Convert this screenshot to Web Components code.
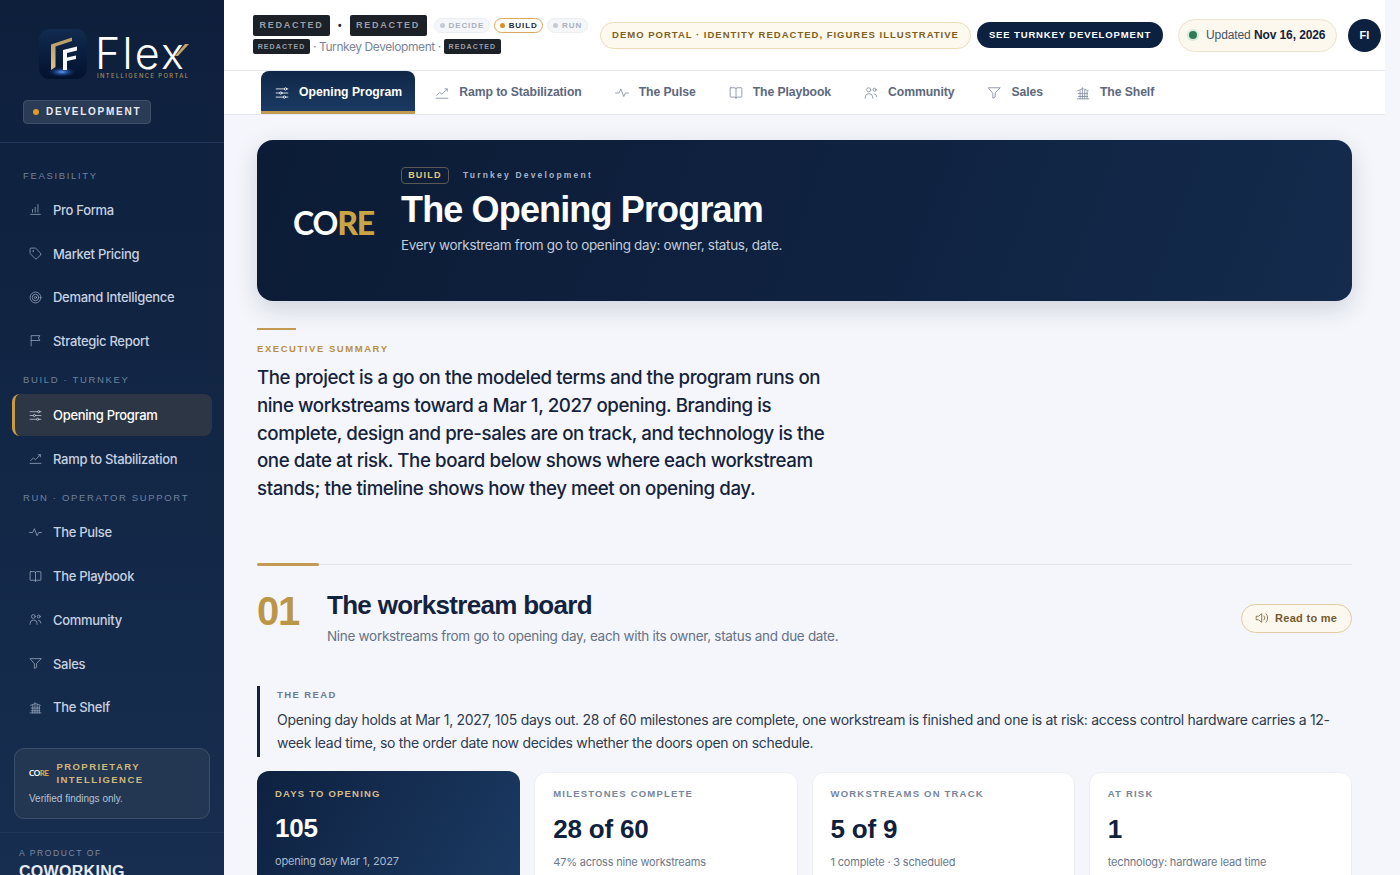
<!doctype html>
<html lang="en"><head><meta charset="utf-8"><title>Flex Intelligence Portal</title>
<style>
html,body{margin:0;height:875px;overflow:hidden;background:#f4f6fb;font-family:"Liberation Sans",sans-serif}
</style></head><body>
<app-shell>
  <side-bar slot="side"></side-bar>
  <top-bar></top-bar>
  <tab-bar></tab-bar>
  <page-body>
    <hero-band></hero-band>
    <exec-summary></exec-summary>
    <section-head num="01" title="The workstream board" sub="Nine workstreams from go to opening day, each with its owner, status and due date."></section-head>
    <read-note>Opening day holds at Mar 1, 2027, 105 days out. 28 of 60 milestones are complete, one workstream is finished and one is at risk: access control hardware carries a 12-week lead time, so the order date now decides whether the doors open on schedule.</read-note>
    <stat-row>
      <stat-card dark label="DAYS TO OPENING" value="105" sub="opening day Mar 1, 2027"></stat-card>
      <stat-card label="MILESTONES COMPLETE" value="28 of 60" sub="47% across nine workstreams"></stat-card>
      <stat-card label="WORKSTREAMS ON TRACK" value="5 of 9" sub="1 complete · 3 scheduled"></stat-card>
      <stat-card label="AT RISK" value="1" sub="technology: hardware lead time"></stat-card>
    </stat-row>
  </page-body>
</app-shell>
<script>
const ICONS={
 bars:'<path d="M3 21h18M6.5 17v-5M11.5 17V8M16.5 17V3"/>',
 tag:'<path d="M12.6 2.6A2 2 0 0 0 11.2 2H4a2 2 0 0 0-2 2v7.2a2 2 0 0 0 .6 1.4l8.7 8.7a2.4 2.4 0 0 0 3.4 0l6.6-6.6a2.4 2.4 0 0 0 0-3.4z"/><circle cx="7.5" cy="7.5" r=".6"/>',
 target:'<circle cx="12" cy="12" r="10"/><circle cx="12" cy="12" r="6"/><circle cx="12" cy="12" r="2"/>',
 flag:'<path d="M4 22V3h16l-2.5 4.5L20 12H4"/>',
 sliders:'<path d="M2 5h14M20 5h2M2 12h6M12 12h10M2 19h12M18 19h4"/><circle cx="18" cy="5" r="2"/><circle cx="10" cy="12" r="2"/><circle cx="16" cy="19" r="2"/>',
 trend:'<path d="M2 21h20M3 16l5-5 4 3 9-9"/><path d="M17 5h4v4"/>',
 pulse:'<path d="M23 12h-5l-3 6-5-13-3 7H1"/>',
 book:'<path d="M12 5v16M3 3h7a2 2 0 0 1 2 2 2 2 0 0 1 2-2h7a1 1 0 0 1 1 1v14a1 1 0 0 1-1 1h-7a2 2 0 0 0-2 2 2 2 0 0 0-2-2H3a1 1 0 0 1-1-1V4a1 1 0 0 1 1-1z"/>',
 users:'<circle cx="8" cy="6.5" r="3.5"/><path d="M2 21v-1.5A6.5 6.5 0 0 1 8.5 13 6.5 6.5 0 0 1 15 19.5V21"/><circle cx="18" cy="6.5" r="2.7"/><path d="M17.5 13.5A5 5 0 0 1 22 18.5"/>',
 filter:'<path d="M22 3H2l8 9.5V21l4-2v-6.5z"/>',
 shelf:'<path d="M2 22h20M4 18h16M4 13h7M13 13h7M7 22V8M11 22V3M15 22V7M19 22V9M3 8l8-3M13 5l8 3"/>',
 vol:'<path d="M11 5 6 9H2v6h4l5 4z"/><path d="M15.5 8.5a5 5 0 0 1 0 7M19 5a10 10 0 0 1 0 14"/>'
};
const def=(n,render)=>customElements.define(n,class extends HTMLElement{
  connectedCallback(){ if(this.shadowRoot)return; const r=this.attachShadow({mode:'open'}); r.innerHTML=render(this); }
});
const a=(el,n)=>el.getAttribute(n)||'';
const LS='"Liberation Sans",sans-serif', IN='Inter,"Liberation Sans",sans-serif';
def('line-icon',el=>`<style>:host{display:inline-flex;width:var(--s,14px);height:var(--s,14px);flex:none}svg{width:100%;height:100%;fill:none;stroke:currentColor;stroke-width:var(--w,1.35);stroke-linecap:round;stroke-linejoin:round}</style><svg viewBox="0 0 24 24">${ICONS[a(el,'name')]}</svg>`);

def('app-shell',()=>`<style>:host{display:flex;height:875px;overflow:hidden}
main{width:1161px;flex:none;display:flex;flex-direction:column;min-height:0;overflow:hidden}</style>
<slot name="side"></slot><main><slot></slot></main>`);

def('flex-logo',()=>`<style>:host{display:flex;align-items:flex-start;gap:10px;position:relative}
.w{font:300 43px/38px ${IN};color:#fff;letter-spacing:2.2px;display:block;height:38px;margin:5px 0 0 -2px}
.t{font:500 5.8px/8px ${IN};color:#a68f5e;letter-spacing:1.42px;display:block;white-space:nowrap;margin:0}
.x{position:absolute;left:136px;top:14px}</style>
<svg width="48" height="50" viewBox="0 0 48 50"><defs><linearGradient id="g" x1="0" y1="0" x2="0" y2="1"><stop offset="0" stop-color="#112a4f"/><stop offset="1" stop-color="#03122d"/></linearGradient><linearGradient id="o" x1="0" y1="0" x2="0" y2="1"><stop offset="0" stop-color="#b59a62"/><stop offset="1" stop-color="#e0c186"/></linearGradient><radialGradient id="h" cx=".5" cy=".5" r=".5"><stop offset="0" stop-color="#5a9dff"/><stop offset="1" stop-color="#0a2f78" stop-opacity="0"/></radialGradient></defs>
<rect width="48" height="50" rx="10" fill="url(#g)"/><ellipse cx="23" cy="43" rx="14" ry="5" fill="url(#h)"/>
<path d="M12 41V15.5l21-7v3.500l-16.500 5.500V38z" fill="url(#o)"/><path d="M24 41V21l14-3.500v4l-10 2.500v4.500l9-2v3.500l-9 2V41z" fill="#f4f6fa"/></svg>
<div><span class="w">Flex</span><span class="t">INTELLIGENCE PORTAL</span></div>
<svg class="x" width="14" height="13" viewBox="0 0 14 13"><path d="M0 13 10 1h4L3 13z" fill="#c3a369"/></svg>`);

def('nav-label',()=>`<style>:host{display:block;font:400 9.5px/14px ${LS};letter-spacing:1.65px;color:#6f819d;padding:0 23px;white-space:nowrap;margin-bottom:var(--mb,6px)}</style><slot></slot>`);
def('nav-item',el=>`<style>:host{display:flex;align-items:center;gap:11px;height:41.7px;margin:0 12px 2px;padding-left:17px;box-sizing:border-box;border-radius:8px;font:500 13px/16px ${IN};letter-spacing:-.3px;color:#c7d1e0;--s:13px;--w:1.4;white-space:nowrap}
:host([active]){background:#2c3645;color:#fff;border-left:3px solid #c89a45;padding-left:14px}
line-icon{color:#9aa9bf}:host([active]) line-icon{color:#c8d1dd}</style><line-icon name="${a(el,'icon')}"></line-icon><slot></slot>`);

def('side-bar',()=>`<style>:host{display:flex;flex-direction:column;width:224px;flex:none;height:875px;box-sizing:border-box;background:linear-gradient(180deg,#0d1f3b 0%,#172e50 100%);overflow:hidden}
.top{height:143px;flex:none;box-sizing:border-box;border-bottom:1px solid #22375a;padding:29px 0 0 39px}
.pill{display:inline-flex;align-items:center;gap:7px;margin:20px 0 0 -16px;height:24px;width:128px;box-sizing:border-box;padding-left:9px;background:#2a3b56;border:1px solid #3f506b;border-radius:4px;font:700 10px/1 ${LS};letter-spacing:1.75px;color:#e6ebf3}
.pill i{width:6px;height:6px;border-radius:50%;background:#e09a2c}
nav{padding-top:26px;flex:none}nav .g{margin-top:11.5px;--mb:7px}nav .g2{margin-top:11px}
.card{margin:17.5px 14px 0;height:71px;flex:none;box-sizing:border-box;background:#233753;border:1px solid #3b4e6b;border-radius:10px;padding:11px 14px}
.r{display:flex;align-items:center;gap:8px}.c{font:700 8px/1 Lato,${LS};letter-spacing:-.5px;color:#fff;width:21px}.c b{color:#c9a64e}
.p{font:700 9.5px/13px ${LS};letter-spacing:1.45px;color:#d1b77b}
.v{font:400 10px/14px ${LS};color:#b7c2d2;margin-top:6px}
.f{margin-top:13px;border-top:1px solid #22375a;padding:14px 19px 0}
.a{font:400 8.5px/12px ${LS};letter-spacing:1.6px;color:#7c8aa2}.k{font:700 16px/18px ${LS};color:#e6eaf0;letter-spacing:.3px;margin-top:4px}</style>
<div class="top"><flex-logo></flex-logo><span class="pill"><i></i>DEVELOPMENT</span></div>
<nav><nav-label>FEASIBILITY</nav-label>
<nav-item icon="bars">Pro Forma</nav-item><nav-item icon="tag">Market Pricing</nav-item><nav-item icon="target">Demand Intelligence</nav-item><nav-item icon="flag">Strategic Report</nav-item>
<div class="g"><nav-label>BUILD · TURNKEY</nav-label></div>
<nav-item icon="sliders" active>Opening Program</nav-item><nav-item icon="trend">Ramp to Stabilization</nav-item>
<div class="g g2"><nav-label>RUN · OPERATOR SUPPORT</nav-label></div>
<nav-item icon="pulse">The Pulse</nav-item><nav-item icon="book">The Playbook</nav-item><nav-item icon="users">Community</nav-item><nav-item icon="filter">Sales</nav-item><nav-item icon="shelf">The Shelf</nav-item></nav>
<div class="card"><div class="r"><span class="c">CO<b>RE</b></span><span class="p">PROPRIETARY INTELLIGENCE</span></div><div class="v">Verified findings only.</div></div>
<div class="f"><div class="a">A PRODUCT OF</div><div class="k">COWORKING</div></div>`);

def('redact-tag',el=>`<style>:host{display:inline-flex;align-items:center;justify-content:center;background:#1c2027;color:#9a9ea6;border-radius:2px;font:700 ${el.hasAttribute('sm')?'7px':'9px'}/1 ${LS};letter-spacing:${el.hasAttribute('sm')?'1.1px':'1.75px'};height:${el.hasAttribute('sm')?'15px':'21px'};width:${el.hasAttribute('sm')?'57px':'77px'}}</style>REDACTED`);
def('phase-pill',el=>`<style>:host{display:inline-flex;align-items:center;gap:4px;height:15px;box-sizing:border-box;padding:0 4.5px 0 5px;border-radius:8px;border:1px solid #eceef3;background:#f5f6f9;color:#a9b0bd;font:700 8px/1 ${LS};letter-spacing:.9px}
:host([on]){background:#fffdf8;border-color:#d9a860;color:#1f2b40}i{width:5px;height:5px;border-radius:50%;background:#c5cad3}:host([on]) i{background:#d98e2b}</style><i></i><slot></slot>`);

def('top-bar',()=>`<style>:host{display:flex;align-items:center;flex:none;box-sizing:border-box;height:71px;background:#fff;border-bottom:1px solid #e5e8ef;padding:0 4px 0 29px}
.id{width:347px;flex:none}.l{display:flex;align-items:center}.l1 b{margin:0 8px;font:700 10px/1 ${LS};color:#1c2027}.l1 phase-pill{margin-right:4px}.l1 phase-pill:first-of-type{margin-left:7px}.l1{margin-top:-1px}
.l2{margin-top:3px;font:400 12px/15px ${IN};letter-spacing:-.42px;color:#7a8699;gap:3px}
.demo{display:flex;align-items:center;justify-content:center;width:371px;height:27px;box-sizing:border-box;flex:none;background:#fdf9ee;border:1px solid #ecdcb6;border-radius:14px;font:700 9.5px/1 ${LS};letter-spacing:1px;color:#7e6120;white-space:nowrap}
.cta{display:flex;align-items:center;justify-content:center;width:186px;height:26px;flex:none;margin-left:6px;background:#0c2140;color:#fff;border-radius:13px;font:700 9.5px/1 ${LS};letter-spacing:.86px;white-space:nowrap}
.up{display:flex;align-items:center;gap:9px;box-sizing:border-box;width:159px;height:33px;flex:none;margin-left:15px;padding-left:10px;background:#fcf8ee;border:1px solid #ece3cd;border-radius:17px;font:400 12px/1 ${LS};letter-spacing:-.1px;color:#465266;white-space:nowrap}
.up i{width:8px;height:8px;border-radius:50%;background:#2f7d57;box-shadow:0 0 0 2px #d8eadf}.up b{font-weight:700;color:#16233a}
.av{width:33px;height:33px;flex:none;margin-left:11px;border-radius:50%;background:#0c2140;color:#fff;display:flex;align-items:center;justify-content:center;font:700 11px/1 ${LS}}</style>
<div class="id"><div class="l l1"><redact-tag></redact-tag><b>•</b><redact-tag></redact-tag><phase-pill>DECIDE</phase-pill><phase-pill on>BUILD</phase-pill><phase-pill>RUN</phase-pill></div>
<div class="l l2"><redact-tag sm></redact-tag>· Turnkey Development ·<redact-tag sm></redact-tag></div></div>
<div class="demo">DEMO PORTAL · IDENTITY REDACTED, FIGURES ILLUSTRATIVE</div><div class="cta">SEE TURNKEY DEVELOPMENT</div>
<div class="up"><i></i><span>Updated <b>Nov 16, 2026</b></span></div><div class="av">FI</div>`);

def('tab-item',el=>`<style>:host{display:inline-flex;align-items:center;gap:10px;height:43px;box-sizing:border-box;padding:0 13px 0 20px;font:700 12.2px/1 ${LS};letter-spacing:-.07px;color:#5c687c;white-space:nowrap;--s:14px;--w:1.4}
:host([active]){background:linear-gradient(180deg,#0f2747,#1b3a63);color:#fff;border-radius:8px 8px 0 0;border-bottom:3px solid #c29a52;padding:3px 13px 0 14px;letter-spacing:.02px}line-icon{color:#7f8b9e}:host([active]) line-icon{color:#fff}</style><line-icon name="${a(el,'icon')}"></line-icon><slot></slot>`);
def('tab-bar',()=>`<style>:host{display:flex;flex:none;height:44px;box-sizing:border-box;background:#fff;border-bottom:1px solid #e5e8ef;padding-left:37px}</style>
<tab-item icon="sliders" active>Opening Program</tab-item><tab-item icon="trend">Ramp to Stabilization</tab-item><tab-item icon="pulse">The Pulse</tab-item><tab-item icon="book">The Playbook</tab-item><tab-item icon="users">Community</tab-item><tab-item icon="filter">Sales</tab-item><tab-item icon="shelf">The Shelf</tab-item>`);

def('page-body',()=>`<style>:host{display:block;padding:25px 33px 0;flex:1;min-height:0;box-sizing:border-box;overflow:hidden}</style><slot></slot>`);

def('hero-band',()=>`<style>:host{display:flex;align-items:center;height:161px;box-sizing:border-box;padding:0 36px 20px;border-radius:16px;background:linear-gradient(110deg,#0c1c36 0%,#0f2240 55%,#142b4d 100%);box-shadow:0 8px 24px rgba(16,32,64,.16);color:#fff}
.logo{font:700 32px/1 Lato,"Open Sans",sans-serif;letter-spacing:-1.2px;width:108px;flex:none;margin-top:24px}.logo b{color:#c9a545}
.m{display:flex;align-items:center;gap:14px}.tag{border:1px solid #5a5a52;border-radius:4px;height:17px;width:48px;box-sizing:border-box;display:flex;align-items:center;justify-content:center;font:700 9px/1 ${LS};letter-spacing:1.25px;color:#e2c77e}
.k{font:700 8.5px/1 ${LS};letter-spacing:2.2px;color:#a6b3c8}
h1{margin:6px 0;font:700 36px/40px ${LS};letter-spacing:-.85px}
p{margin:0;font:400 13.5px/18px ${IN};letter-spacing:-.32px;color:#c1ccdb}</style>
<div class="logo">CO<b>RE</b></div><div><div class="m"><span class="tag">BUILD</span><span class="k">Turnkey Development</span></div><h1>The Opening Program</h1><p>Every workstream from go to opening day: owner, status, date.</p></div>`);

def('exec-summary',()=>`<style>:host{display:block;margin-top:27px}i{display:block;width:39px;height:2px;background:#c29a52}
.k{font:700 9.5px/12px ${LS};letter-spacing:1.55px;color:#b8903f;margin-top:13px}
p{margin:9px 0 0;width:580px;font:500 18.7px/27.8px ${IN};letter-spacing:-.42px;color:#15233c}</style>
<i></i><div class="k">EXECUTIVE SUMMARY</div><p>The project is a go on the modeled terms and the program runs on nine workstreams toward a Mar 1, 2027 opening. Branding is complete, design and pre-sales are on track, and technology is the one date at risk. The board below shows where each workstream stands; the timeline shows how they meet on opening day.</p>`);

def('section-head',el=>`<style>:host{display:block;margin-top:61px;border-top:1px solid #dfe3eb;position:relative}
.bar{position:absolute;left:0;top:-2px;width:62px;height:3px;border-radius:2px;background:#c29a52}
.r{display:flex;align-items:flex-start;padding-top:24px}.n{font:700 40px/44px ${LS};letter-spacing:-1.3px;color:#bb9648;width:70px;flex:none}
.t{flex:1}h2{margin:0;font:700 26px/32px ${LS};letter-spacing:-.7px;color:#13233f}
p{margin:6px 0 0;font:400 13.5px/18px ${IN};letter-spacing:-.3px;color:#667286}
button{all:unset;display:flex;align-items:center;gap:6px;box-sizing:border-box;width:111px;height:29px;margin-top:15px;padding-left:13px;border:1px solid #dfcba3;border-radius:15px;background:#fcf8f0;font:700 11px/1 ${LS};letter-spacing:.3px;color:#725a2c;--s:14px}</style>
<div class="bar"></div><div class="r"><div class="n">${a(el,'num')}</div><div class="t"><h2>${a(el,'title')}</h2><p>${a(el,'sub')}</p></div><button><line-icon name="vol"></line-icon>Read to me</button></div>`);

def('read-note',()=>`<style>:host{display:block;margin-top:41px;border-left:3px solid #13233f;padding-left:17px;height:71px;box-sizing:border-box}
.k{font:700 9.5px/12px ${LS};letter-spacing:1.4px;color:#6f7b8e;padding-top:3px}
p{margin:7px 0 0;font:400 14px/23px ${IN};letter-spacing:-.29px;color:#2f3b50}</style><div class="k">THE READ</div><p><slot></slot></p>`);

def('stat-row',()=>`<style>:host{display:grid;grid-template-columns:repeat(4,1fr);gap:14px;margin-top:14px}</style><slot></slot>`);
def('stat-card',el=>`<style>:host{display:block;height:120px;box-sizing:border-box;background:#fff;border:1px solid #eceff4;border-radius:12px;padding:15px 18px;margin-top:1px}
:host([dark]){background:linear-gradient(120deg,#0e2140,#1b3a62);border:0;padding:17px 18px;margin-top:0}
.k{font:700 9.5px/12px ${LS};letter-spacing:1.2px;color:#78859a;white-space:nowrap}:host([dark]) .k{color:#d3bd8b}
.v{margin-top:13px;font:700 26px/32px ${LS};letter-spacing:-.2px;color:#10213d}:host([dark]) .v{color:#fff;margin-top:12px}
.s{margin-top:10px;font:400 11px/14px ${IN};letter-spacing:-.18px;color:#6c7789}:host([dark]) .s{color:#aab8cc}</style>
<div class="k">${a(el,'label')}</div><div class="v">${a(el,'value')}</div><div class="s">${a(el,'sub')}</div>`);
</script></body></html>
